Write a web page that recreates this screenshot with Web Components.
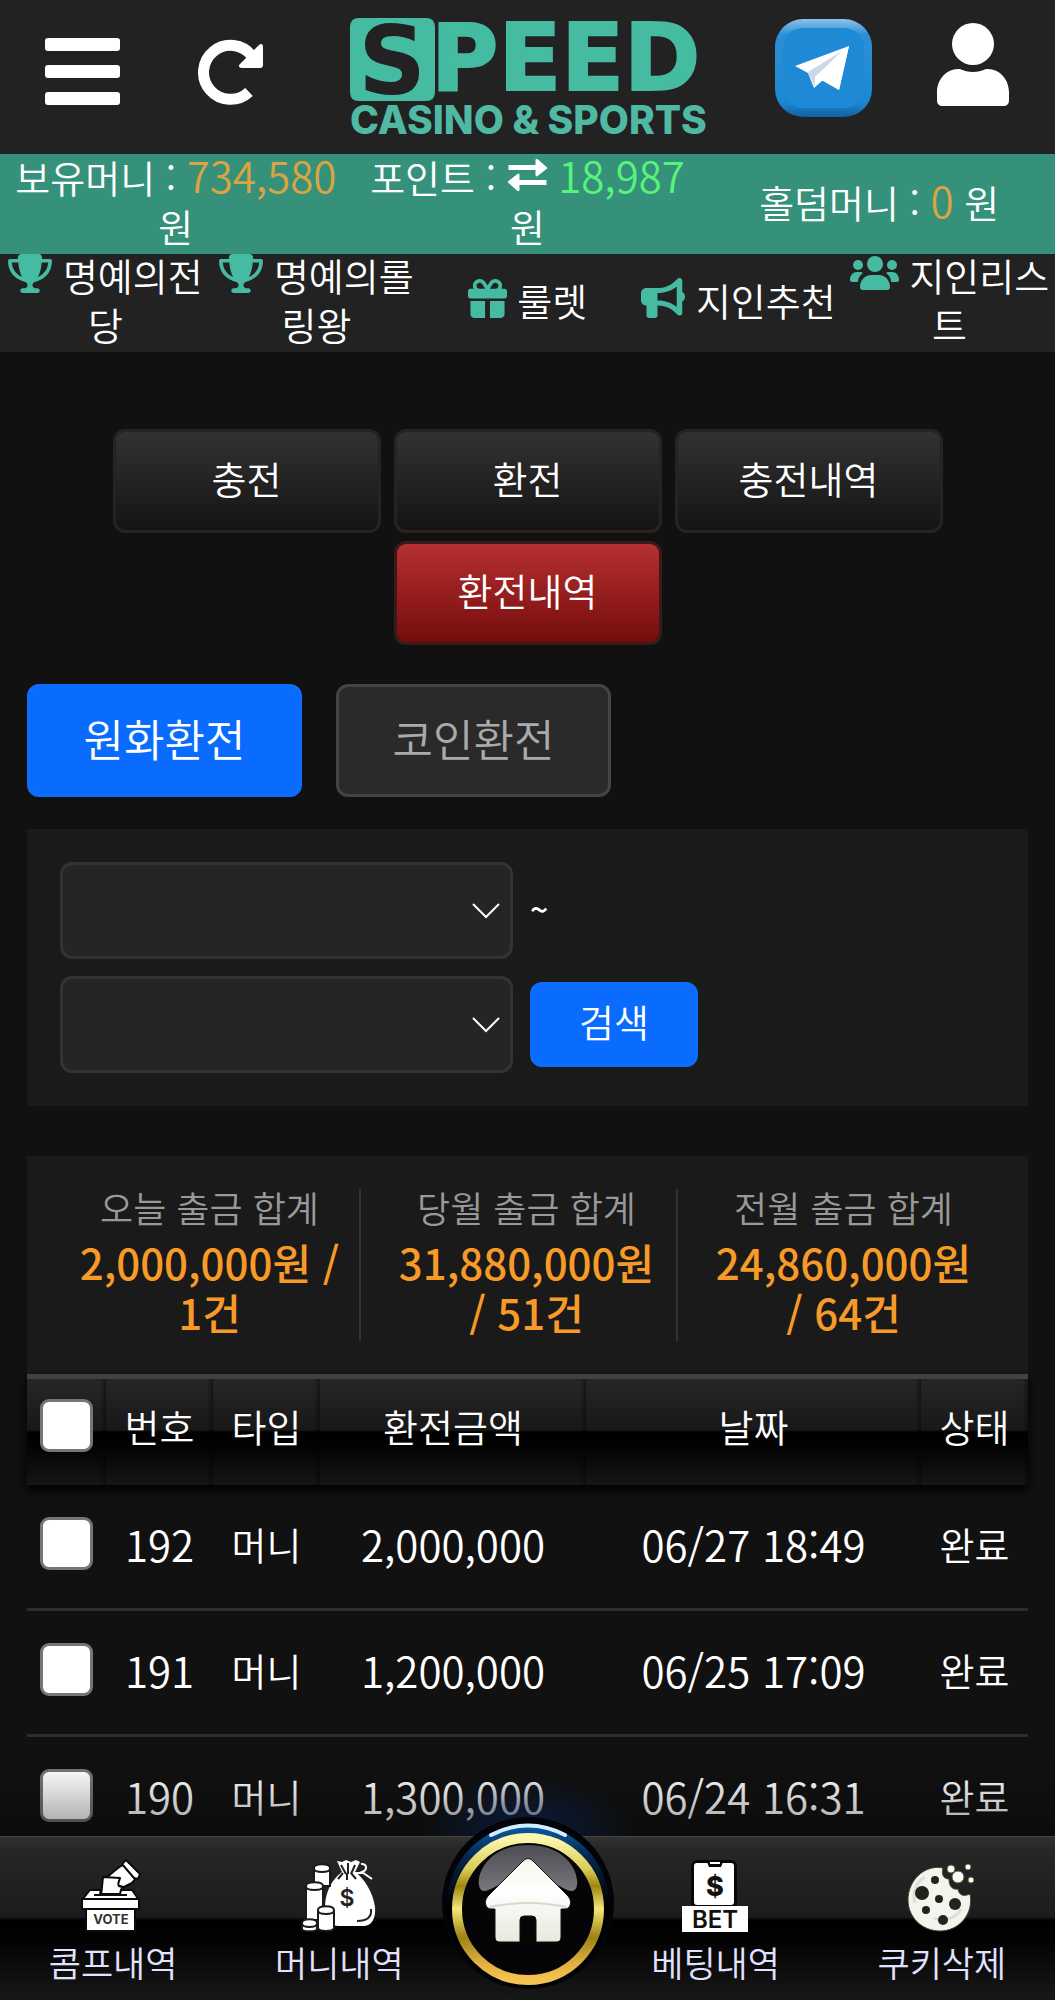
<!DOCTYPE html>
<html lang="ko">
<head>
<meta charset="UTF-8">
<meta name="viewport" content="width=device-width, initial-scale=1">
<title>SPEED CASINO &amp; SPORTS</title>
<style>
  body {
    margin: 0;
    background: #111;
    color: #fff;
    font-family: "Noto Sans CJK KR", "Noto Sans", sans-serif;
    font-weight: 350;
    font-size: 38px;
    line-height: 49px;
  }
</style>
</head>
<body>
<speed-app></speed-app>

<script>
const icons = {
  trophy: '<svg width="44" height="39" viewBox="0 0 576 512"><path d="M400 0H176c-26.5 0-48.1 21.8-47.1 48.2c.2 5.3 .4 10.6 .7 15.8H24C10.7 64 0 74.7 0 88c0 92.6 33.5 157 78.5 200.7c44.3 43.1 98.3 64.8 138.1 75.8c23.4 6.5 39.4 26 39.4 45.6c0 20.9-17 37.9-37.9 37.9H192c-17.7 0-32 14.3-32 32s14.3 32 32 32H384c17.7 0 32-14.3 32-32s-14.3-32-32-32H357.9C337 448 320 431 320 410.1c0-19.6 15.9-39.2 39.4-45.6c39.9-11 93.9-32.7 138.2-75.8C542.5 245 576 180.6 576 88c0-13.3-10.7-24-24-24H446.4c.3-5.2 .5-10.4 .7-15.8C448.1 21.8 426.5 0 400 0zM48.9 112h84.4c9.1 90.1 29.2 150.3 51.9 190.6c-24.9-11-50.8-26.5-73.2-48.3c-32-31.1-58-76-63-142.3zM464.1 254.3c-22.4 21.8-48.3 37.3-73.2 48.3c22.7-40.3 42.8-100.5 51.9-190.6h84.4c-5.1 66.3-31.1 111.2-63 142.3z"/></svg>',
  gift: '<svg width="39" height="39" viewBox="0 0 512 512"><path d="M190.5 68.8L225.3 128H224 152c-22.1 0-40-17.9-40-40s17.9-40 40-40h2.2c14.9 0 28.8 7.9 36.3 20.8zM64 88c0 14.4 3.5 28 9.6 40H32c-17.7 0-32 14.3-32 32v64c0 17.7 14.3 32 32 32H480c17.7 0 32-14.3 32-32V160c0-17.7-14.3-32-32-32H438.4c6.1-12 9.6-25.6 9.6-40c0-48.6-39.4-88-88-88h-2.2c-31.9 0-61.5 16.9-77.7 44.4L256 85.5l-24.1-41C215.7 16.9 186.1 0 154.2 0H152C103.4 0 64 39.4 64 88zm336 0c0 22.1-17.9 40-40 40H288h-1.3l34.8-59.2C329.1 55.9 342.9 48 357.8 48H360c22.1 0 40 17.9 40 40zM32 288V464c0 26.5 21.5 48 48 48H224V288H32zM288 512H432c26.5 0 48-21.5 48-48V288H288V512z"/></svg>',
  bullhorn: '<svg width="44" height="40" viewBox="0 0 512 512" preserveAspectRatio="none"><path d="M480 32c0-12.9-7.8-24.6-19.8-29.6s-25.7-2.2-34.9 6.9L381.7 53c-48 48-113.1 75-181 75H192 160 64c-35.3 0-64 28.7-64 64v96c0 35.3 28.7 64 64 64l0 128c0 17.7 14.3 32 32 32h64c17.7 0 32-14.3 32-32V352l8.7 0c67.9 0 133 27 181 75l43.6 43.6c9.2 9.2 22.9 11.9 34.9 6.9s19.8-16.6 19.8-29.6V300.4c18.6-8.8 32-32.5 32-60.4s-13.4-51.6-32-60.4V32zm-64 76.7V240 371.3C357.2 317.8 280.5 288 200.7 288H192V192h8.7c79.8 0 156.5-29.8 215.3-83.3z"/></svg>',
  users: '<svg width="49" height="39" viewBox="0 0 49 39"><circle cx="25" cy="10" r="8"/><circle cx="8" cy="11" r="5"/><circle cx="42" cy="11" r="5"/><path d="M10 33c0-7 5-12 11-12h8c6 0 11 5 11 12 0 2-1 3-3 3H13c-2 0-3-1-3-3zM0 26c0-5 3-8 7-8h3c1 0 2 0 3 1-3 2-5 5-5 9H2c-1 0-2-1-2-2zM49 26c0-5-3-8-7-8h-3c-1 0-2 0-3 1 3 2 5 5 5 9h6c1 0 2-1 2-2z"/></svg>',
  swap: '<svg width="41" height="34" viewBox="0 0 40 34"><path d="M1 6h27V1c0-1 1-1 2-1l9 8c1 1 1 1 0 2l-9 7c-1 1-2 0-2-1v-5H1zM39 26H12v5c0 1-1 1-2 1l-9-8c-1-1-1-1 0-2l9-7c1-1 2 0 2 1v5h27z"/></svg>',
  vote: `<svg width="76" height="72" viewBox="0 0 76 72">
    <g fill="#fff" stroke="#0a0a0a" stroke-width="2" stroke-linejoin="round">
      <path d="M31 18l12-10 8-5 11 14-5 6-8 4-6-1-6-5-5 1z"/>
      <path d="M47 4l4-4 14 14-2 5-4-1z"/>
      <path d="M28 17l17 1c-1 4-3 6-1 8l3 1-2 9H26z"/>
      <path d="M15 30h11l-1 4h20l1-4h11l7 10H7z"/>
      <path d="M7 39h57v10H7z"/><path d="M11 49h49v22H11z"/>
    </g>
    <path d="M19 35h33" stroke="#111" stroke-width="2"/>
    <text x="36" y="64" text-anchor="middle" font-family="Inter, sans-serif" font-weight="700" font-size="13" fill="#333">VOTE</text>
  </svg>`,
  money: `<svg width="76" height="72" viewBox="0 0 76 72">
    <path d="M36 1l5 1 4-2 5 2 5-2 4 2-5 10c9 6 18 20 20 35 1 11-3 18-10 19H38c-9 0-14-6-14-18 0-15 6-28 17-36z" fill="#fff"/>
    <path d="M40 5l5 9M47 3v11M54 5l-4 9M37 19l5-6M46 20v-7M55 19l-5-6" stroke="#222" stroke-width="2" fill="none"/>
    <path d="M52 13h10M60 4c6-1 7 6 1 8l10 7" stroke="#fff" stroke-width="2" fill="none"/>
    <path d="M70 49c1 8-4 12-14 12" stroke="#222" stroke-width="2" fill="none"/>
    <text x="46" y="46" text-anchor="middle" font-family="Inter, sans-serif" font-weight="600" font-size="23" fill="#222">$</text>
    <g fill="#fff" stroke="#1a1a1a" stroke-width="2">
      <path d="M13 8c0-5 16-5 16 0v18H13z"/><path d="M13 9c1 4 15 4 16 0" fill="none"/>
      <path d="M5 26c0-5 17-5 17 0v34H5z"/><path d="M5 27c1 4 16 4 17 0" fill="none"/>
      <path d="M17 50c0-5 16-5 16 0v18c-1 4-15 4-16 0z"/><path d="M17 51c1 4 15 4 16 0" fill="none"/>
      <path d="M1 63c0-5 15-5 15 0v6c-1 3-14 3-15 0z"/><path d="M1 64c1 4 14 4 15 0" fill="none"/>
    </g>
  </svg>`,
  bet: `<svg width="76" height="72" viewBox="0 0 76 72">
    <rect x="13" y="0" width="46" height="50" rx="6" fill="#080808"/>
    <rect x="16" y="3" width="40" height="42" rx="3" fill="#fff"/>
    <path d="M29 2h16l-2 5H31z" fill="#080808"/><path d="M32 3h10" stroke="#fff" stroke-width="2"/>
    <text x="37" y="36" text-anchor="middle" font-family="Inter, sans-serif" font-weight="800" font-size="27" fill="#111">$</text>
    <path d="M4 46h66v26H4z" fill="#fff"/>
    <text x="37" y="68" text-anchor="middle" font-family="Inter, sans-serif" font-weight="600" font-size="24" fill="#111">BET</text>
  </svg>`,
  cookie: `<svg width="76" height="72" viewBox="0 0 76 72">
    <path d="M39 8c-2 7 1 11 6 11 0 8 4 11 9 10 1 6 5 8 12 5 4 20-11 37-30 37-18 0-32-14-32-31C4 20 21 4 39 8z" fill="#f4f4ef" stroke="#45452e" stroke-width="1"/>
    <path d="M21 17c-9 5-13 16-10 26M30 58c10 5 22 0 27-9" fill="none" stroke="#ddd" stroke-width="3"/>
    <g fill="#222319"><circle cx="18" cy="33" r="7"/><circle cx="31" cy="20" r="4"/><circle cx="35" cy="39" r="4"/><circle cx="51" cy="44" r="6"/><circle cx="22" cy="50" r="4"/><circle cx="39" cy="60" r="5"/></g>
    <g fill="#fbfbf0" stroke="#59583c"><circle cx="54" cy="17" r="6"/><circle cx="47" cy="9" r="4"/><circle cx="64" cy="7" r="3"/><circle cx="67" cy="20" r="3"/></g>
  </svg>`
};

const withdrawals = [
  { no: 192, type: '머니', amount: '2,000,000', date: '06/27 18:49', status: '완료' },
  { no: 191, type: '머니', amount: '1,200,000', date: '06/25 17:09', status: '완료' },
  { no: 190, type: '머니', amount: '1,300,000', date: '06/24 16:31', status: '완료' }
];

class BaseElement extends HTMLElement {
  constructor() {
    super();
    this.attachShadow({ mode: 'open' });
  }

  connectedCallback() {
    this.shadowRoot.innerHTML = this.render();
  }
}

class AppHeader extends BaseElement {
  render() {
    return `
      <style>
        :host {
          display: grid;
          grid-template-columns: 1fr 1fr 3fr 1fr 1fr;
          justify-items: center;
          height: 154px;
          padding: 0 7px;
          box-sizing: border-box;
          background: #222;
        }
        button, a { display: block; height: 154px; padding: 0; border: 0; background: none; cursor: pointer; }
        svg { display: block; overflow: visible; }
      </style>
      <button aria-label="메뉴">
        <svg width="100" height="154" viewBox="0 0 100 154" fill="#fff">
          <rect x="14" y="38" width="75" height="13" rx="3"/><rect x="14" y="65" width="75" height="13" rx="3"/><rect x="14" y="92" width="75" height="13" rx="3"/>
        </svg>
      </button>
      <button aria-label="새로고침">
        <svg width="100" height="154" viewBox="0 0 100 154">
          <path d="M69 92A27 27 0 1 1 72 56" fill="none" stroke="#fff" stroke-width="11"/>
          <path d="M79 45c2-2 4-1 4 2v18c0 2-1 3-3 3H62c-3 0-4-2-2-4z" fill="#fff"/>
        </svg>
      </button>
      <a href="#" aria-label="SPEED CASINO &amp; SPORTS">
        <svg width="354" height="154" viewBox="0 0 354 154">
          <path d="M9 18h67q9 0 9 9v65q0 9-9 9H9q-9 0-9-9V27q0-9 9-9z" fill="#45bba2"/>
          <g font-family="DejaVu Sans, sans-serif" font-weight="700">
            <text x="42" y="94" text-anchor="middle" font-size="94" fill="#222">S</text>
            <text x="81" y="90" font-size="92" fill="#45bba2" stroke="#45bba2" stroke-width="2">PEED</text>
          </g>
          <text x="0" y="134" font-family="Inter, sans-serif" font-weight="800" font-size="39" fill="#4fb9a3">CASINO &amp; SPORTS</text>
        </svg>
      </a>
      <a href="#" aria-label="텔레그램">
        <svg width="100" height="154" viewBox="0 0 100 154">
          <defs>
            <linearGradient id="plate" x2="0" y2="1"><stop offset="0" stop-color="#8cc2ea"/><stop offset=".16" stop-color="#2d8fd6"/><stop offset=".85" stop-color="#1c88d2"/><stop offset="1" stop-color="#12609f"/></linearGradient>
          </defs>
          <rect x="0" y="19" width="97" height="98" rx="28" fill="url(#plate)"/>
          <rect x="8" y="28" width="81" height="80" rx="20" fill="#1e8ad5"/>
          <path d="M20 66l54-20-10 44-16-10-9 8-6-15z" fill="#fff"/>
          <path d="M33 72l34-21-27 26v10z" fill="#cdd7e8"/>
          <path d="M74 46L41 77l23 13z" fill="#fff"/>
        </svg>
      </a>
      <a href="#" aria-label="내 정보">
        <svg width="100" height="154" viewBox="0 0 100 154" fill="#fff">
          <circle cx="49" cy="44" r="21"/>
          <path d="M36 69c8 4 18 4 26 0 14-1 23 11 23 23v8c0 4-2 6-6 6H19c-4 0-6-2-6-6v-8c0-12 9-24 23-23z"/>
        </svg>
      </a>
    `;
  }
}

class MoneyItem extends BaseElement {
  render() {
    return `
      <style>
        :host { display: block; text-align: center; padding: 0 8px; }
        .amount { color: #d9a441; font-size: 42px; }
        :host([tone="point"]) .amount { color: #56f47a; }
        svg { fill: #fff; }
      </style>
      <slot name="label"></slot> : ${this.hasAttribute('swap') ? icons.swap : ''}
      <span class="amount"><slot name="amount"></slot></span> 원
    `;
  }
}

class MenuLink extends BaseElement {
  render() {
    return `
      <style>
        :host { display: block; text-align: center; }
        a { color: inherit; text-decoration: none; }
        svg { fill: #45bba2; vertical-align: -2px; }
      </style>
      <a href="#">${icons[this.getAttribute('icon')]} <slot></slot></a>
    `;
  }
}

class AppButton extends BaseElement {
  render() {
    return `
      <style>
        :host { display: block; }
        button {
          width: 100%;
          height: 104px;
          padding: 0 0 8px;
          border: 3px solid #282222;
          border-radius: 12px;
          background: linear-gradient(#323232, #141414);
          color: #fff;
          font: inherit;
          cursor: pointer;
        }
        :host([kind="active"]) button { border-color: #3a1a1a; background: linear-gradient(#b63030, #760c0c); }
        :host([kind="primary"]) button, :host([kind="plain"]) button { height: 113px; padding-bottom: 4px; font-size: 44px; }
        :host([kind="primary"]) button, :host([kind="search"]) button { border-color: #0d6efd; background: #0a6cff; }
        :host([kind="plain"]) button { border-color: #444; background: #2a2a2a; color: #aaa; }
        :host([kind="search"]) button { height: 85px; }
      </style>
      <button><slot></slot></button>
    `;
  }
}

class DateSelect extends BaseElement {
  render() {
    return `
      <style>
        :host { display: block; position: relative; width: 453px; }
        select {
          display: block;
          width: 100%;
          height: 97px;
          border: 3px solid #333;
          border-radius: 12px;
          background: #252525;
          color: #fff;
          font: inherit;
          appearance: none;
        }
        svg { position: absolute; right: 12px; top: 40px; pointer-events: none; }
      </style>
      <select aria-label="${this.getAttribute('label')}"><option></option></select>
      <svg width="30" height="18" viewBox="0 0 30 18"><path d="M2 2l13 13L28 2" fill="none" stroke="#fff" stroke-width="2"/></svg>
    `;
  }
}

class StatCard extends BaseElement {
  render() {
    return `
      <style>
        :host { display: block; height: 152px; text-align: center; border-right: 2px solid #333; }
        :host(:last-child) { border-right-color: transparent; }
        .label { font-size: 36px; line-height: 36px; color: #999; }
        .value { font-size: 42px; line-height: 50px; font-weight: 500; color: #f79a28; padding: 12px 16px 0; }
      </style>
      <div class="label"><slot name="label"></slot></div>
      <div class="value"><slot></slot></div>
    `;
  }
}

class HistoryTable extends BaseElement {
  render() {
    const rows = withdrawals.map(row => `
      <tr>
        <td><input type="checkbox" aria-label="${row.no} 선택"></td>
        <td class="num">${row.no}</td>
        <td>${row.type}</td>
        <td class="num">${row.amount}</td>
        <td class="num">${row.date}</td>
        <td>${row.status}</td>
      </tr>`).join('');

    return `
      <style>
        :host { display: block; }
        table { width: 100%; table-layout: fixed; border-collapse: separate; border-spacing: 0; text-align: center; }
        thead { box-shadow: 0 5px 10px #000; }
        th {
          height: 111px;
          padding: 0 0 14px;
          box-sizing: border-box;
          border-top: 5px solid #414141;
          font-weight: inherit;
          background:
            linear-gradient(to left, rgba(0, 0, 0, .4), transparent 6px),
            linear-gradient(#262626, #181818 48%, #000 50%, #020202 62%, #161616);
        }
        td { height: 126px; padding: 0 0 6px; box-sizing: border-box; border-bottom: 3px solid #2c2c2c; }
        .num { font-size: 42px; }
        input {
          appearance: none;
          display: block;
          width: 53px;
          height: 53px;
          margin: 0 0 0 13px;
          box-sizing: border-box;
          border: 3px solid #767676;
          border-radius: 9px;
          background: #fff;
        }
      </style>
      <table>
        <colgroup>
          <col style="width: 79px"><col style="width: 107px"><col style="width: 107px"><col style="width: 266px"><col><col style="width: 107px">
        </colgroup>
        <thead>
          <tr>
            <th><input type="checkbox" aria-label="전체 선택"></th>
            <th>번호</th><th>타입</th><th>환전금액</th><th>날짜</th><th>상태</th>
          </tr>
        </thead>
        <tbody>${rows}</tbody>
      </table>
    `;
  }
}

class NavItem extends BaseElement {
  render() {
    return `
      <style>
        :host { display: block; flex: 1; }
        a {
          display: flex;
          flex-direction: column;
          align-items: center;
          gap: 8px;
          padding-top: 23px;
          color: #e0e2ff;
          font-size: 35px;
          line-height: 44px;
          text-decoration: none;
        }
        svg { overflow: visible; }
      </style>
      <a href="#">${icons[this.getAttribute('icon')]}<slot></slot></a>
    `;
  }
}

class HomeButton extends BaseElement {
  render() {
    return `
      <style>
        :host { display: block; position: relative; width: 150px; }
        a { position: absolute; left: -15px; bottom: 5px; }
        svg { display: block; }
      </style>
      <a href="#" aria-label="홈">
        <svg width="180" height="180" viewBox="0 0 180 180">
          <defs>
            <linearGradient id="gold" x2="0" y2="1"><stop offset="0" stop-color="#fdf8b0"/><stop offset=".22" stop-color="#d9cc55"/><stop offset=".34" stop-color="#a08412"/><stop offset=".5" stop-color="#f4e878"/><stop offset=".7" stop-color="#9c8314"/><stop offset=".88" stop-color="#e0b040"/><stop offset="1" stop-color="#f5c351"/></linearGradient>
            <linearGradient id="rim" x2="0" y2="1"><stop offset="0" stop-color="#0d5ea8"/><stop offset=".2" stop-color="#06274e"/><stop offset=".5" stop-color="#000"/></linearGradient>
            <linearGradient id="gloss" x2="0" y2="1"><stop offset="0" stop-color="#4c4c52"/><stop offset="1" stop-color="#77777d"/></linearGradient>
            <linearGradient id="wall" x2="0" y2="1"><stop offset="0" stop-color="#f4f6ee"/><stop offset=".4" stop-color="#fff"/><stop offset="1" stop-color="#e6e9dc"/></linearGradient>
          </defs>
          <circle cx="90" cy="88" r="86" fill="#02040a"/>
          <circle cx="90" cy="90" r="81" fill="url(#rim)"/>
          <path d="M53 20Q90 1 127 20" fill="none" stroke="#cdefff" stroke-width="4" stroke-linecap="round"/>
          <circle cx="90" cy="94" r="71" fill="#050507" stroke="url(#gold)" stroke-width="10"/>
          <path d="M46 76C34 76 40 30 90 30s56 46 44 46c-8 0-22-14-44-14S54 76 46 76z" fill="url(#gloss)"/>
          <path d="M85 46q5-5 10 0l35 35c5 6 2 13-3 13h-4v28q0 5-5 5H98v-22q0-4-4-4h-8q-4 0-4 4v22H62q-5 0-5-5V94h-4c-5 0-8-7-3-13z" fill="url(#wall)" stroke="#111" stroke-width="1"/>
          <path d="M52 92q38-8 76 0" fill="none" stroke="#d7dacb" stroke-width="2"/>
        </svg>
      </a>
    `;
  }
}

class BottomNav extends BaseElement {
  render() {
    return `
      <style>
        :host { display: block; position: fixed; left: 0; right: 0; bottom: 0; }
        nav {
          display: flex;
          height: 164px;
          box-sizing: border-box;
          border-top: 1px solid #444;
          background: linear-gradient(#323232, #262626 8%, #1c1c1c 49%, #000 51%, #020202 62%, #181818);
        }
        /* fade over the last visible rows, with the glow of the home button */
        .fade {
          position: absolute;
          left: 0;
          right: 0;
          bottom: 164px;
          height: 70px;
          background:
            radial-gradient(110px 60px at 50% 100%, rgba(12, 36, 84, .7), transparent),
            linear-gradient(transparent, rgba(5, 5, 5, .4));
          pointer-events: none;
        }
      </style>
      <div class="fade"></div>
      <nav>
        <nav-item icon="vote">콤프내역</nav-item>
        <nav-item icon="money">머니내역</nav-item>
        <home-button></home-button>
        <nav-item icon="bet">베팅내역</nav-item>
        <nav-item icon="cookie">쿠키삭제</nav-item>
      </nav>
    `;
  }
}

class SpeedApp extends BaseElement {
  render() {
    return `
      <style>
        :host { display: block; }
        .money, .menu { display: grid; align-items: center; min-height: 98px; }
        .money { grid-template-columns: repeat(3, 1fr); min-height: 99px; background: #36917b; }
        .menu { grid-template-columns: repeat(5, 1fr); background: #222; }
        money-item, menu-link { margin: -4px 0 4px; }
        main { padding: 77px 27px 0; }
        .tabs { display: flex; flex-wrap: wrap; justify-content: center; gap: 8px 13px; padding: 0 80px; }
        .tabs app-button { width: 268px; }
        .kinds { display: flex; gap: 34px; padding: 39px 0 32px; }
        .kinds app-button { width: 275px; }
        .filter {
          display: flex;
          flex-wrap: wrap;
          align-items: center;
          gap: 17px;
          padding: 33px;
          background: #1a1a1a;
        }
        .filter app-button { width: 168px; }
        .filter span { padding-bottom: 4px; font-weight: 500; font-size: 32px; }
        .stats {
          display: grid;
          grid-template-columns: repeat(3, 1fr);
          gap: 16px;
          margin-top: 50px;
          padding: 33px;
          background: #1a1a1a;
        }
      </style>
      <app-header></app-header>
      <section class="money">
        <money-item><span slot="label">보유머니</span><span slot="amount">734,580</span></money-item>
        <money-item tone="point" swap><span slot="label">포인트</span><span slot="amount">18,987</span></money-item>
        <money-item><span slot="label">홀덤머니</span><span slot="amount">0</span></money-item>
      </section>
      <nav class="menu">
        <menu-link icon="trophy">명예의전당</menu-link>
        <menu-link icon="trophy">명예의롤링왕</menu-link>
        <menu-link icon="gift">룰렛</menu-link>
        <menu-link icon="bullhorn">지인추천</menu-link>
        <menu-link icon="users">지인리스트</menu-link>
      </nav>
      <main>
        <div class="tabs">
          <app-button>충전</app-button>
          <app-button>환전</app-button>
          <app-button>충전내역</app-button>
          <app-button kind="active">환전내역</app-button>
        </div>
        <div class="kinds">
          <app-button kind="primary">원화환전</app-button>
          <app-button kind="plain">코인환전</app-button>
        </div>
        <div class="filter">
          <date-select label="시작일"></date-select>
          <span>~</span>
          <date-select label="종료일"></date-select>
          <app-button kind="search">검색</app-button>
        </div>
        <div class="stats">
          <stat-card><span slot="label">오늘 출금 합계</span>2,000,000원 / 1건</stat-card>
          <stat-card><span slot="label">당월 출금 합계</span>31,880,000원 / 51건</stat-card>
          <stat-card><span slot="label">전월 출금 합계</span>24,860,000원 / 64건</stat-card>
        </div>
        <history-table></history-table>
      </main>
      <bottom-nav></bottom-nav>
    `;
  }
}

customElements.define('app-header', AppHeader);
customElements.define('money-item', MoneyItem);
customElements.define('menu-link', MenuLink);
customElements.define('app-button', AppButton);
customElements.define('date-select', DateSelect);
customElements.define('stat-card', StatCard);
customElements.define('history-table', HistoryTable);
customElements.define('nav-item', NavItem);
customElements.define('home-button', HomeButton);
customElements.define('bottom-nav', BottomNav);
customElements.define('speed-app', SpeedApp);
</script>
</body>
</html>
